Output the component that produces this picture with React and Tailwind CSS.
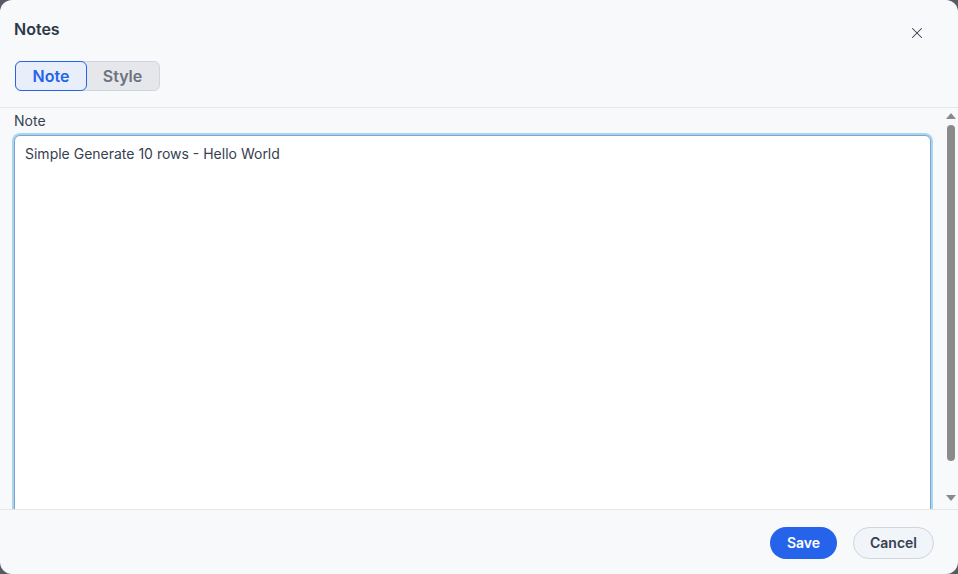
import React, { useState } from 'react';
import { X } from 'lucide-react';

function Scrollbar() {
  return (
    <div className="flex w-[15px] shrink-0 flex-col items-center bg-[#f8f9fa]">
      <svg width="10" height="6" viewBox="0 0 10 6" className="mt-[5px]">
        <path d="M5 0 L10 6 L0 6 Z" fill="#8a8a8a" />
      </svg>
      <div className="mt-[6px] h-[336px] w-[8px] rounded-full bg-[#8a8a8a]" />
      <div className="flex-1" />
      <svg width="10" height="6" viewBox="0 0 10 6" className="mb-[8px]">
        <path d="M0 0 L10 0 L5 6 Z" fill="#8a8a8a" />
      </svg>
    </div>
  );
}

export default function App() {
  const [tab, setTab] = useState('note');
  const [note, setNote] = useState('Simple Generate 10 rows - Hello World');

  return (
    <div className="h-[574px] w-[958px] bg-[#565a63]" style={{ fontFamily: 'Inter, "Noto Sans", sans-serif' }}>
      <div className="flex h-full flex-col overflow-hidden rounded-[12px] bg-[#f8f9fb]">
        {/* header */}
        <div className="relative border-b border-[#e3e6eb] px-3.5 pb-4 pt-[17px]">
          <h2 className="text-base font-semibold leading-6 text-[#2d3748]">Notes</h2>
          <button className="absolute right-[32px] top-[24px] text-[#374151]">
            <X size={18} strokeWidth={1.4} />
          </button>
          <div className="ml-px mt-5 flex h-[30px] w-[145px] rounded-md border border-[#cfd6e0] bg-[#e5e7eb]">
            <button
              onClick={() => setTab('note')}
              className={`-m-px w-[72px] rounded-md border text-base font-semibold ${tab === 'note' ? 'border-[#2563eb] bg-[#e8eefa] text-[#2563eb]' : 'border-transparent text-[#6b7280]'}`}
            >
              Note
            </button>
            <button
              onClick={() => setTab('style')}
              className={`-my-px flex-1 rounded-md border text-base font-semibold ${tab === 'style' ? 'border-[#2563eb] bg-[#e8eefa] text-[#2563eb]' : 'border-transparent text-[#6b7280]'}`}
            >
              Style
            </button>
          </div>
        </div>

        {/* body */}
        <div className="flex min-h-0 flex-1">
          <div className="min-w-0 flex-1 overflow-hidden pb-3 pl-3.5 pr-3 pt-[3px]">
            <label className="block text-sm leading-5 text-[#374151]">Note</label>
            <textarea
              value={note}
              onChange={e => setNote(e.target.value)}
              className="mt-[4px] block h-[400px] w-full resize-none rounded-md border border-[#7ba3cf] bg-white px-2.5 py-2 text-sm leading-5 text-[#374151] outline-none ring-2 ring-[#a9d5ee]"
            />
          </div>
          <Scrollbar />
        </div>

        {/* footer */}
        <div className="flex h-[65px] items-center justify-end gap-4 border-t border-[#e3e6eb] px-6 pt-px">
          <button className="h-8 w-[67px] rounded-full bg-[#2563eb] text-sm font-semibold text-white">Save</button>
          <button className="h-8 w-[81px] rounded-full border border-[#cfd6e0] bg-[#f1f4f8] text-sm font-semibold text-[#374151]">Cancel</button>
        </div>
      </div>
    </div>
  );
}
